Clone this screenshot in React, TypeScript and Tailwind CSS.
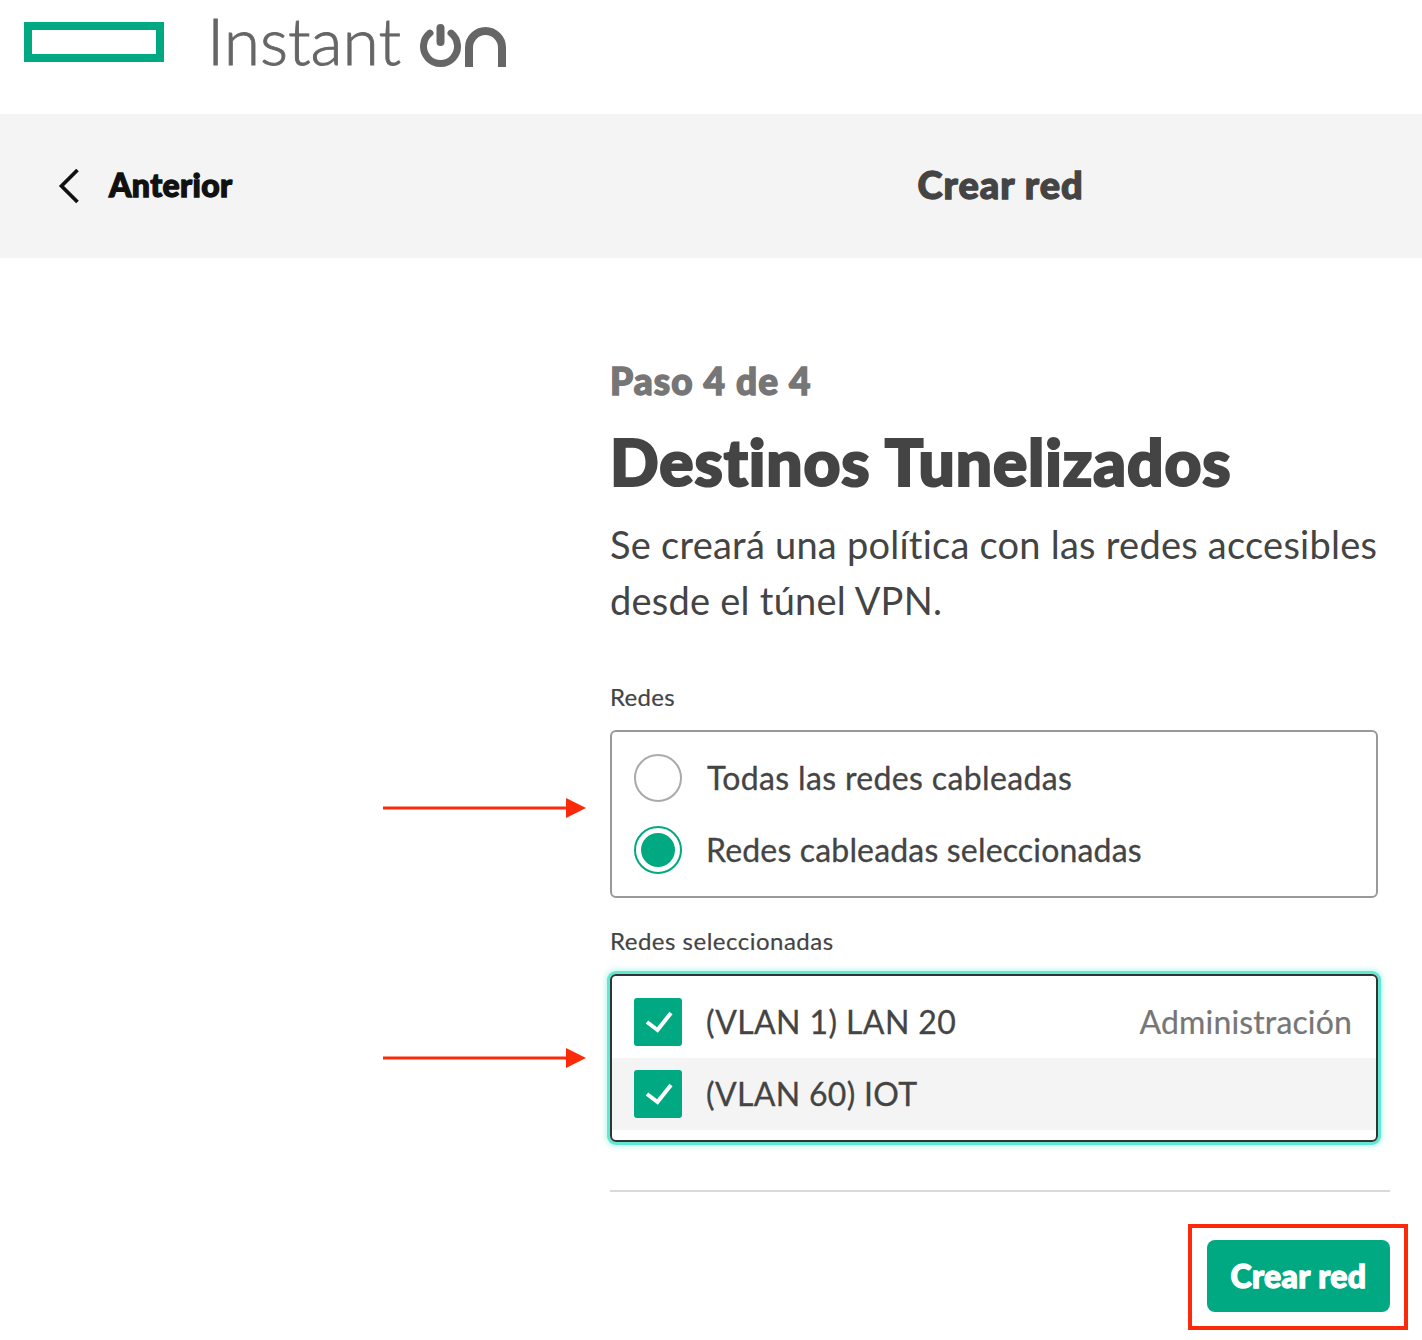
import React from "react";

function Arrow() {
  return (
    <svg width="204" height="22" viewBox="0 0 204 22" className="block">
      <rect x="0" y="9.5" width="184" height="3" fill="#fb2a0a" />
      <path d="M183 1 L203 11 L183 21 Z" fill="#fb2a0a" />
    </svg>
  );
}

function Check() {
  return (
    <div className="w-12 h-12 rounded-[3px] bg-[#01a982] shrink-0">
      <svg width="48" height="48" viewBox="0 0 48 48" fill="none">
        <path d="M13 24 L23.5 32 L37 15" stroke="#fff" strokeWidth="4" />
      </svg>
    </div>
  );
}

export default function App() {
  return (
    <div className="relative w-[1422px] h-[1340px] bg-white overflow-hidden font-['Lato','Noto_Sans',sans-serif] text-[#444444]">
      <header className="h-[114px] flex items-start pl-6">
        <div className="mt-[22px] w-[140px] h-[40px] border-[8px] border-[#01a982] shrink-0" />
        <div className="ml-[43px] flex items-start">
          <span className="w-[213px] text-[66px] leading-[80px] font-light text-[#666666] [-webkit-text-stroke:0.9px_#666666]">Instant</span>
          <svg width="90" height="50" viewBox="0 0 90 50" fill="none" className="mt-[20px]">
            <path d="M10 13.1 A17 17 0 1 0 31 13.1" stroke="#666" strokeWidth="7" strokeLinecap="round" fill="none" />
            <path d="M20.5 8 V22" stroke="#666" strokeWidth="8" strokeLinecap="round" />
            <path d="M49 47 V27.5 A16.5 16.5 0 0 1 82 27.5 V47" stroke="#666" strokeWidth="8" fill="none" />
          </svg>
        </div>
      </header>

      <div className="h-[144px] bg-[#f4f4f4] relative flex items-center">
        <svg width="24" height="36" viewBox="0 0 24 36" fill="none" className="ml-[58px]">
          <path d="M19.5 2 L3.5 18 L19.5 34" stroke="#111" strokeWidth="3.7" />
        </svg>
        <span className="ml-[27px] -mt-[2px] text-[32px] font-black text-[#111111] tracking-[0.4px] [-webkit-text-stroke:1.3px_#111111]">Anterior</span>
        <span className="ml-[685px] -mt-[4px] text-[38px] font-black text-[#444444] tracking-[1px] [-webkit-text-stroke:1.3px_#444444]">Crear red</span>
      </div>

      <main className="ml-[610px] w-[780px] pt-[97px]">
        <h3 className="text-[37px] leading-[52px] font-black text-[#767676] tracking-[1.1px] [-webkit-text-stroke:1.4px_#767676]">Paso 4 de 4</h3>
        <h1 className="text-[64px] leading-[72px] mt-[19px] font-black text-[#444444] tracking-[0.9px] [-webkit-text-stroke:2.2px_#444444]">Destinos Tunelizados</h1>
        <p className="mt-[18px] w-[780px] text-[38px] leading-[56px] text-[#444444] tracking-[0.24px]">
          Se creará una política con las redes accesibles
          <br />
          desde el túnel VPN.
        </p>

        <div className="mt-[53px] text-[24px] leading-[32px] tracking-[0.3px] [-webkit-text-stroke:0.2px_#444444]">Redes</div>
        <div className="mt-[17px] w-[768px] h-[168px] border-2 border-[#999999] rounded-[6px] pl-[22px] pt-[22px] flex flex-col gap-6">
          <label className="flex items-center h-12">
            <span className="w-12 h-12 rounded-full border-2 border-[#aaaaaa] shrink-0" />
            <span className="ml-[25px] text-[32px] tracking-[0.35px] [-webkit-text-stroke:0.3px_#444444]">Todas las redes cableadas</span>
          </label>
          <label className="flex items-center h-12">
            <span className="w-12 h-12 rounded-full border-2 border-[#01a982] shrink-0 flex items-center justify-center">
              <span className="w-[34px] h-[34px] rounded-full bg-[#01a982]" />
            </span>
            <span className="ml-[24px] text-[32px] tracking-[0.17px] [-webkit-text-stroke:0.3px_#444444]">Redes cableadas seleccionadas</span>
          </label>
        </div>

        <div className="mt-[27px] text-[24px] leading-[32px] tracking-[0.5px] [-webkit-text-stroke:0.2px_#444444]">Redes seleccionadas</div>
        <div className="mt-[17px] w-[768px] h-[168px] border-2 border-[#333333] rounded-[6px] shadow-[0_0_0_3px_#5fe8d2,0_0_5px_5px_#c8f7ef] pt-[22px] overflow-hidden">
          <div className="flex items-center h-12 pl-[22px] pr-6">
            <Check />
            <span className="ml-6 text-[32px] tracking-[0.4px] [-webkit-text-stroke:0.3px_#444444]">(VLAN 1) LAN 20</span>
            <span className="ml-auto text-[32px] text-[#767676] tracking-[0.15px] [-webkit-text-stroke:0.2px_#767676]">Administración</span>
          </div>
          <div className="flex items-center h-[72px] mt-3 pl-[22px] bg-[#f4f4f4]">
            <Check />
            <span className="ml-6 text-[32px] tracking-[0.3px] [-webkit-text-stroke:0.3px_#444444]">(VLAN 60) IOT</span>
          </div>
        </div>

        <div className="mt-[48px] h-[2px] bg-[#d9d9d9]" />
        <div className="mt-[48px] flex justify-end">
          <button className="w-[183px] h-[72px] rounded-[8px] bg-[#01a982] text-white text-[32px] font-black tracking-[0.4px] [-webkit-text-stroke:1.3px_#ffffff]">Crear red</button>
        </div>
      </main>

      <div className="absolute left-[383px] top-[797px]"><Arrow /></div>
      <div className="absolute left-[383px] top-[1047px]"><Arrow /></div>
      <div className="absolute left-[1188px] top-[1224px] w-[220px] h-[106px] border-4 border-[#fb2a0a]" />
    </div>
  );
}
